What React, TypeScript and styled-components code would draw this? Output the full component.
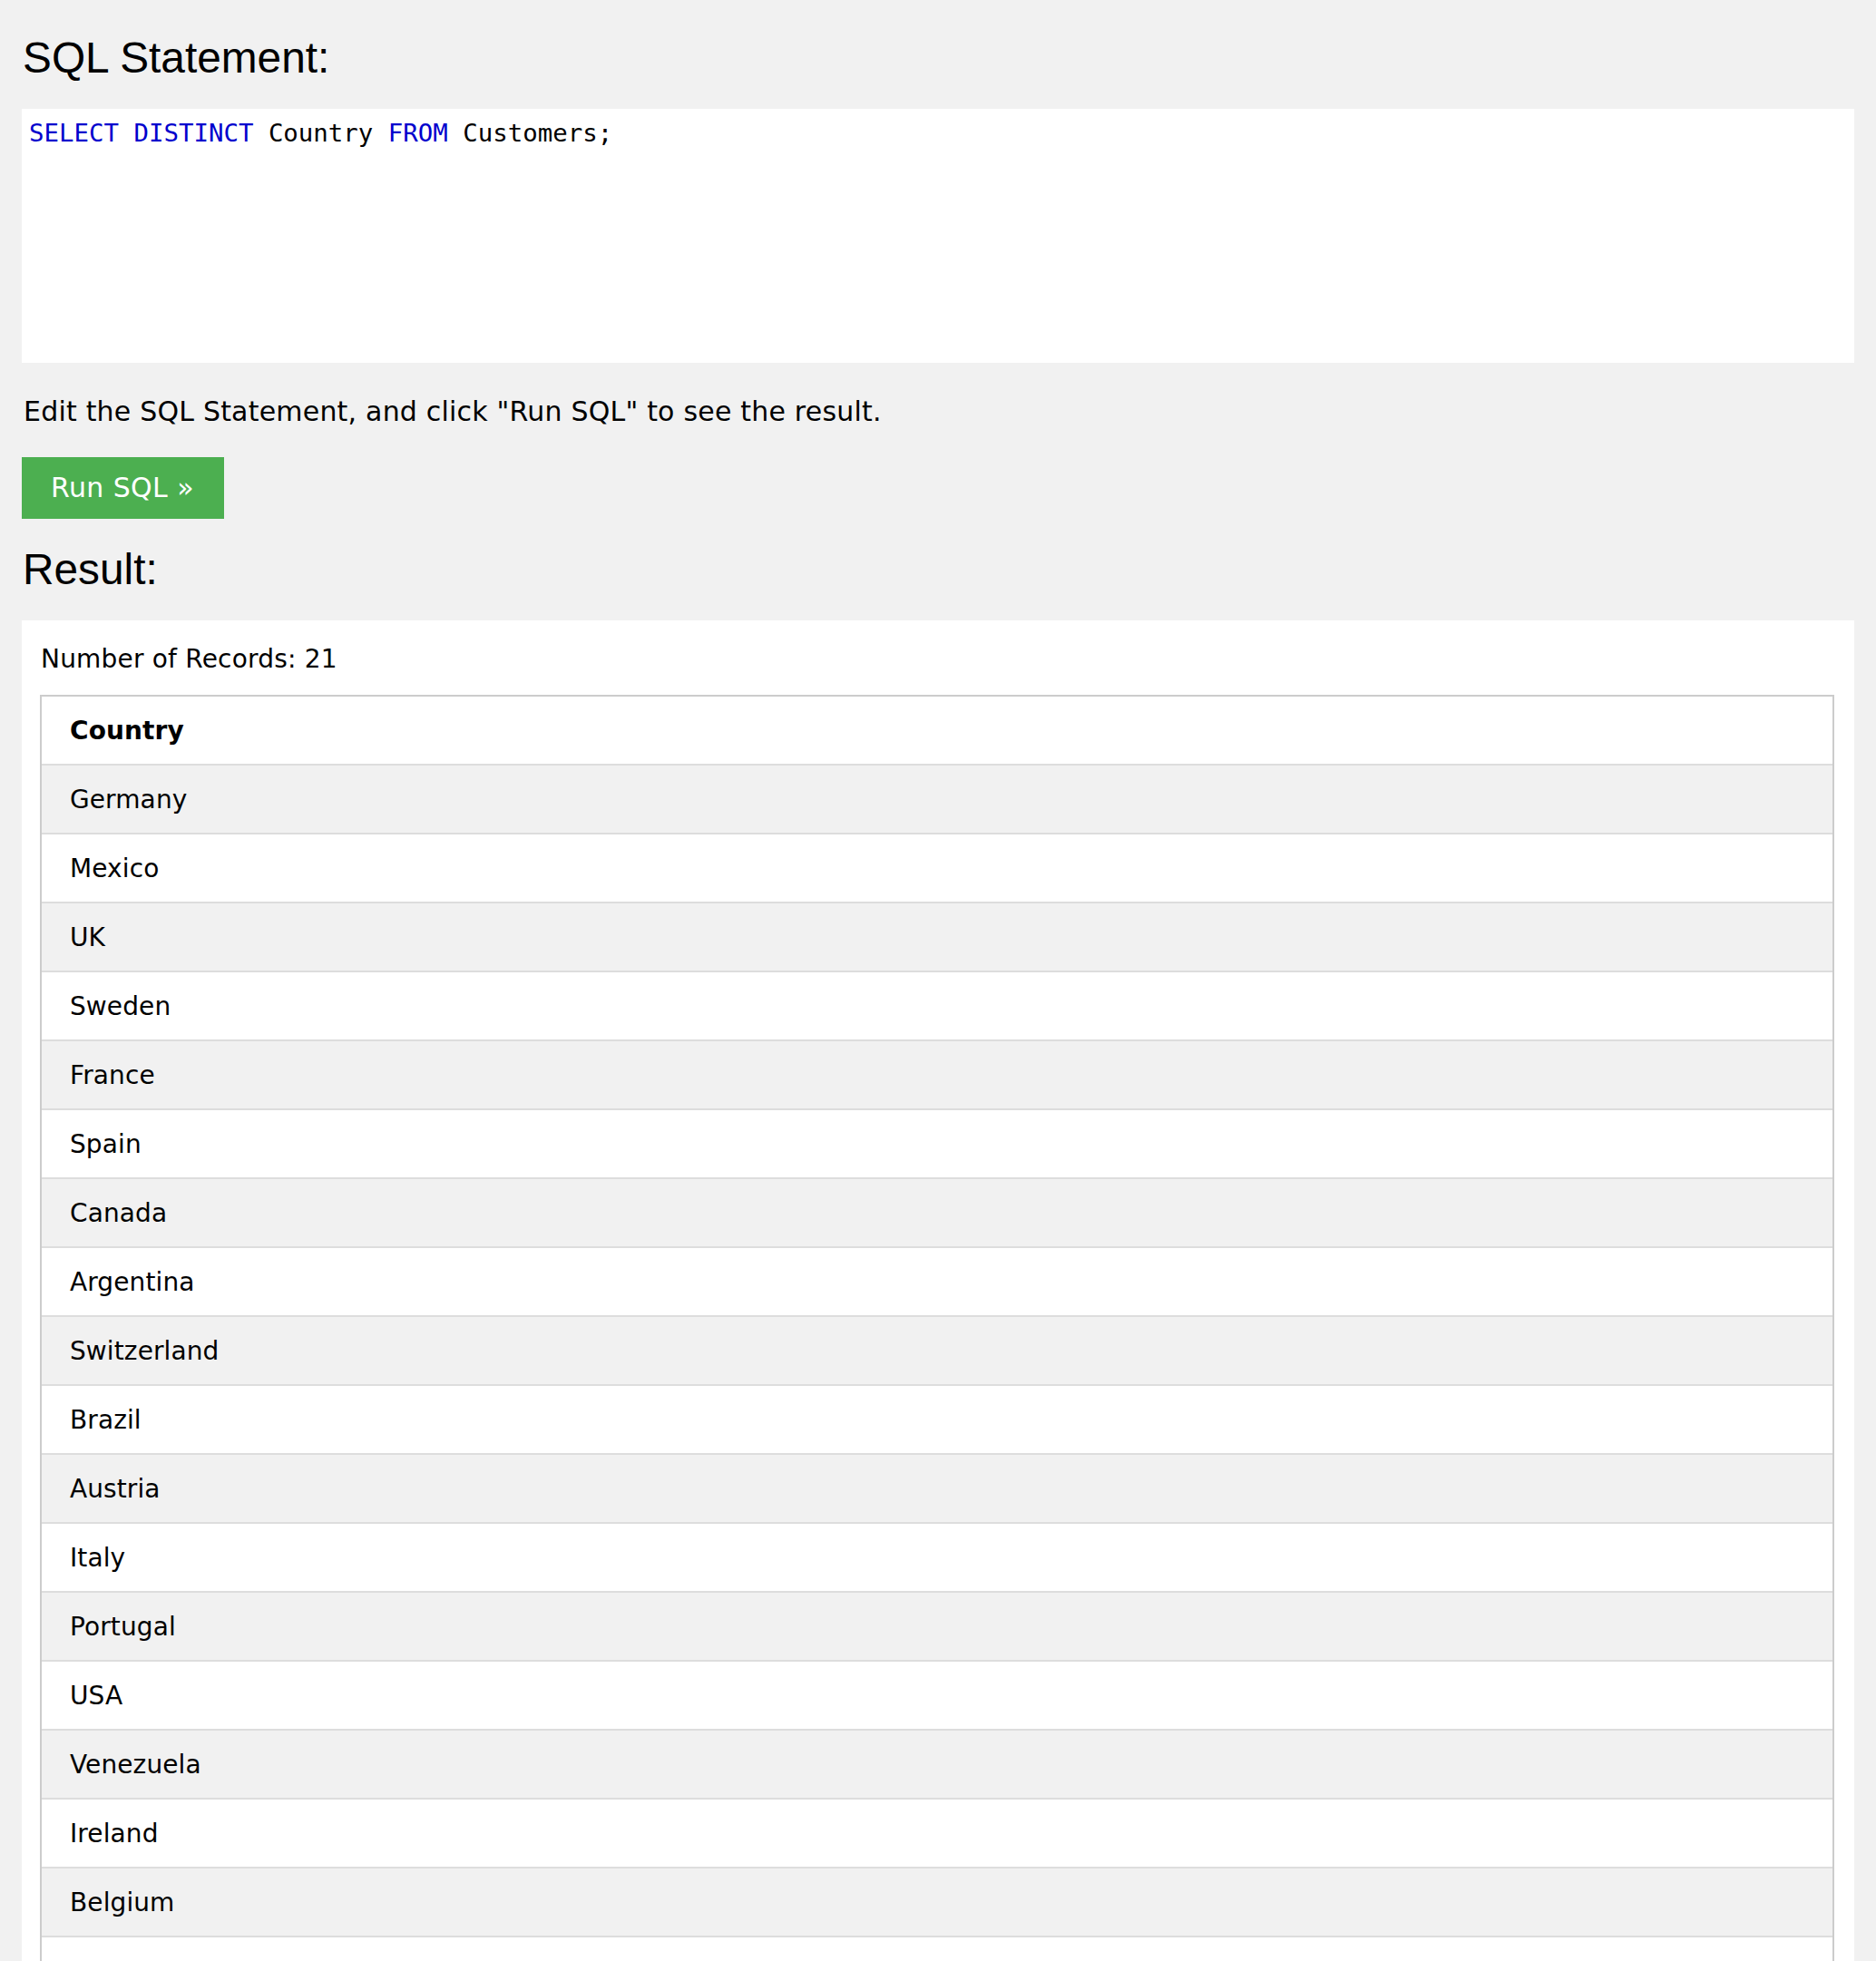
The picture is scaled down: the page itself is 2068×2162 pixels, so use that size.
import React from "react";
import styled, { createGlobalStyle } from "styled-components";

const GlobalStyle = createGlobalStyle`
  html, body {
    margin: 0;
    padding: 0;
    background: #f1f1f1;
  }
  body {
    font-family: Verdana, "DejaVu Sans", sans-serif;
    color: #000;
  }
`;

const Page = styled.div`
  padding: 37px 24px 0;
  display: flex;
  flex-direction: column;
  align-items: stretch;
`;

const Heading = styled.h2`
  margin: 0;
  font-family: "Liberation Sans", Arial, sans-serif;
  font-weight: 400;
  font-size: 47.8px;
  line-height: 54px;
  padding-left: 1px;
`;

const CodeBox = styled.pre`
  margin: 29px 0 0;
  height: 280px;
  box-sizing: border-box;
  background: #fff;
  padding: 11px 8px;
  font-family: "DejaVu Sans Mono", Consolas, monospace;
  font-size: 27.4px;
  line-height: 32px;
  color: #000;
`;

const Keyword = styled.span`
  color: #0000cd;
`;

const Hint = styled.p`
  margin: 36px 0 0;
  font-size: 30px;
  line-height: 36px;
  letter-spacing: 0.2px;
  padding-left: 2px;
`;

const RunButton = styled.button`
  align-self: flex-start;
  margin-top: 32px;
  margin-bottom: 29px;
  border: none;
  background: #4caf50;
  color: #fff;
  font-family: Verdana, "DejaVu Sans", sans-serif;
  font-size: 30px;
  line-height: 36px;
  letter-spacing: 0.4px;
  padding: 16px 33px 16px 32px;
  cursor: pointer;
`;

const ResultBox = styled.div`
  margin-top: 29px;
  background: #fff;
  padding: 26px 22px 20px 20px;
`;

const Records = styled.div`
  font-size: 28px;
  line-height: 34px;
  letter-spacing: 0.2px;
  padding-left: 1px;
  margin-bottom: 22px;
`;

const Table = styled.table`
  width: 100%;
  border: 2px solid #ccc;
  border-collapse: separate;
  border-spacing: 0;
  font-size: 28px;
  letter-spacing: 0.1px;
`;

const Row = styled.tr<{ $striped: boolean }>`
  background: ${(p) => (p.$striped ? "#f1f1f1" : "#fff")};
  &:last-child td {
    border-bottom: none;
  }
`;

const HeadCell = styled.th`
  text-align: left;
  font-weight: 700;
  padding: 21px 31px 19px;
  line-height: 34px;
  border-bottom: 2px solid #ddd;
`;

const Cell = styled.td`
  padding: 21px 31px 19px;
  line-height: 34px;
  border-bottom: 2px solid #ddd;
`;

const countries = [
  "Germany",
  "Mexico",
  "UK",
  "Sweden",
  "France",
  "Spain",
  "Canada",
  "Argentina",
  "Switzerland",
  "Brazil",
  "Austria",
  "Italy",
  "Portugal",
  "USA",
  "Venezuela",
  "Ireland",
  "Belgium",
  "Norway",
  "Denmark",
  "Finland",
  "Poland",
];

export default function App() {
  return (
    <>
      <GlobalStyle />
      <Page>
        <Heading>SQL Statement:</Heading>
        <CodeBox>
          <Keyword>SELECT</Keyword> <Keyword>DISTINCT</Keyword> Country{" "}
          <Keyword>FROM</Keyword> Customers;
        </CodeBox>
        <Hint>Edit the SQL Statement, and click "Run SQL" to see the result.</Hint>
        <RunButton type="button">Run SQL »</RunButton>
        <Heading>Result:</Heading>
        <ResultBox>
          <Records>Number of Records: {countries.length}</Records>
          <Table>
            <thead>
              <Row $striped={false}>
                <HeadCell>Country</HeadCell>
              </Row>
            </thead>
            <tbody>
              {countries.map((c, i) => (
                <Row key={c} $striped={i % 2 === 0}>
                  <Cell>{c}</Cell>
                </Row>
              ))}
            </tbody>
          </Table>
        </ResultBox>
      </Page>
    </>
  );
}
